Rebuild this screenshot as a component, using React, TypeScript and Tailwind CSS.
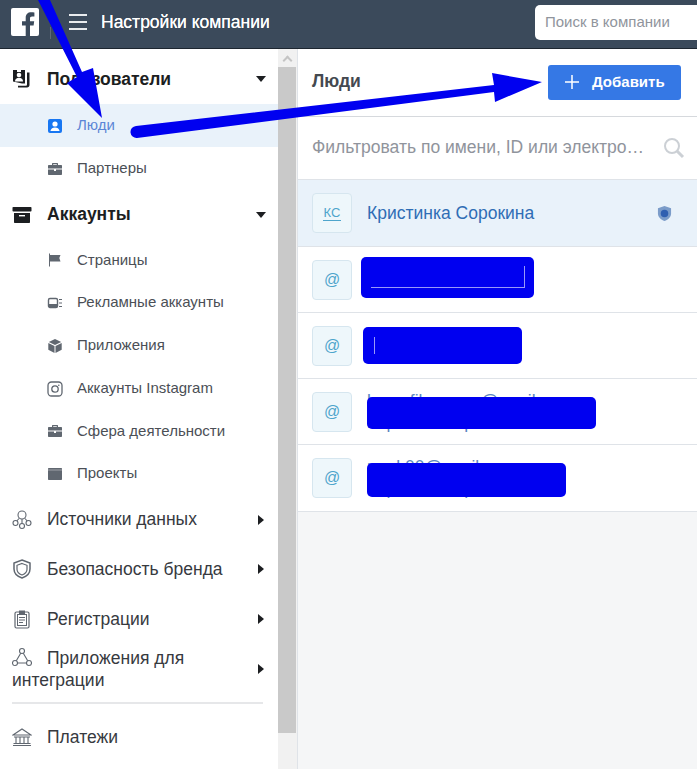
import React from "react";

const G = "#606770";

function Svg({ className, children, vb = "0 0 16 16" }: { className?: string; children: React.ReactNode; vb?: string }) {
  return <svg viewBox={vb} className={className} aria-hidden="true">{children}</svg>;
}

const PersonBox = ({ c = "#1877f2" }: { c?: string }) => (
  <Svg className="w-4 h-4">
    <rect x="1" y="1" width="14" height="14" rx="2" fill={c} />
    <circle cx="8" cy="6" r="2.6" fill="#fff" />
    <path d="M3.4 13c.5-2.6 2.4-3.6 4.6-3.6s4.100 1 4.600 3.600z" fill="#fff" />
  </Svg>
);
const Briefcase = () => (
  <Svg className="w-4 h-4">
    <path d="M5 4V2.600C5 2.200 5.300 2 5.600 2h4.800c.3 0 .6.200.6.600V4h-1.200V3.200H6.200V4z" fill={G} />
    <path d="M1 5c0-.6.400-1 1-1h12c.6 0 1 .4 1 1v2.600H1z" fill={G} />
    <path d="M1 8.600h6V10h2V8.600h6V13c0 .6-.4 1-1 1H2c-.6 0-1-.4-1-1z" fill={G} />
  </Svg>
);
const Flag = () => (
  <Svg className="w-4 h-4">
    <rect x="2" y="1.500" width="1" height="13" fill={G} />
    <path d="M3 3h10.500l-1.200 3 1.200 3.500H3z" fill={G} />
  </Svg>
);
const AdAccount = () => (
  <Svg className="w-4 h-4">
    <rect x="1.500" y="3.500" width="9" height="9" rx="1.500" fill="none" stroke={G} strokeWidth="1.400" />
    <rect x="2" y="9" width="8" height="3" fill={G} />
    <path d="M12 4.500h3M12 8h3M12 11.500h3" stroke={G} strokeWidth="1" />
  </Svg>
);
const Cube = () => (
  <Svg className="w-4 h-4">
    <path d="M8 1l6.200 3L8 7 1.800 4z" fill={G} />
    <path d="M1.300 5l6.200 3v7l-6.200-3.200zM14.700 5L8.500 8v7l6.200-3.200z" fill={G} />
  </Svg>
);
const Insta = () => (
  <Svg className="w-4 h-4">
    <rect x="1" y="1" width="14" height="14" rx="3.500" fill="none" stroke={G} strokeWidth="1.300" />
    <circle cx="8" cy="8" r="3.200" fill="none" stroke={G} strokeWidth="1.300" />
    <circle cx="11.800" cy="4.200" r=".8" fill={G} />
  </Svg>
);
const Folder = () => (
  <Svg className="w-4 h-4">
    <path d="M1 3c0-.6.400-1 1-1h12c.6 0 1 .4 1 1v10c0 .6-.4 1-1 1H2c-.6 0-1-.4-1-1z" fill={G} />
    <path d="M1 4h14" stroke="#fff" strokeWidth=".4" />
  </Svg>
);
const Users = () => (
  <Svg className="w-5 h-5" vb="0 0 20 20">
    <path d="M1 1h12v13.500h-3L1 12.500z" fill="#1c1e21" />
    <path d="M5 1h4v2H5z" fill="#fff" />
    <circle cx="7" cy="6" r="2.300" fill="#fff" />
    <path d="M3 12.500c0-2.500 1.700-3.700 4-3.700s4 1.200 4 3.700z" fill="#fff" />
    <path d="M15 3.500h2.500v12.500c0 1.500-1 2.500-2.500 2.500H6v-1.800h7.500c1 0 1.500-.5 1.500-1.500z" fill="#1c1e21" />
  </Svg>
);
const Archive = () => (
  <Svg className="w-5 h-5" vb="0 0 20 20">
    <rect x="0.500" y="2" width="19" height="4.500" rx=".8" fill="#1c1e21" />
    <path d="M2 8h16v9c0 .6-.4 1-1 1H3c-.6 0-1-.4-1-1z" fill="#1c1e21" />
    <rect x="7" y="10" width="6" height="1.400" fill="#fff" />
  </Svg>
);
const DataSources = () => (
  <Svg className="w-5 h-5" vb="0 0 20 20">
    <g fill="none" stroke={G} strokeWidth="1.100">
      <circle cx="10" cy="5" r="4" />
      <circle cx="3.500" cy="13" r="2.500" />
      <circle cx="16.500" cy="13" r="2.500" />
      <circle cx="10" cy="16" r="2.500" />
      <path d="M7 8.500l-2.200 2.500M13 8.500l2.200 2.500M10 9v4.500" />
    </g>
  </Svg>
);
const Shield = () => (
  <Svg className="w-5 h-5" vb="0 0 20 20">
    <path d="M10 1l8 3v6c0 4.500-3.500 7.500-8 9-4.500-1.500-8-4.500-8-9V4z" fill="none" stroke={G} strokeWidth="1.500" />
    <path d="M10 4.500l5 1.800v3.900c0 2.800-2.200 4.800-5 5.800-2.800-1-5-3-5-5.800V6.300z" fill="none" stroke={G} strokeWidth="1.200" />
  </Svg>
);
const Clipboard = () => (
  <Svg className="w-5 h-5" vb="0 0 20 20">
    <rect x="3" y="3" width="14" height="16" rx="1.500" fill="none" stroke={G} strokeWidth="1.200" />
    <rect x="5.500" y="5.500" width="9" height="11" fill="none" stroke={G} strokeWidth="1" />
    <path d="M7 1.500h6V5H7z" fill={G} />
    <path d="M7 8.500h6M7 11h6M7 13.500h4" stroke={G} strokeWidth="1" />
  </Svg>
);
const Triangle = () => (
  <Svg className="w-5 h-5" vb="0 0 20 20">
    <g fill="none" stroke={G} strokeWidth="1.100">
      <circle cx="10" cy="4" r="2.500" />
      <circle cx="3" cy="16" r="2.500" />
      <circle cx="17" cy="16" r="2.500" />
      <path d="M8.700 6.200L4.300 13.800M11.300 6.200l4.400 7.600M5.500 16h9" />
    </g>
  </Svg>
);
const Bank = () => (
  <Svg className="w-5 h-5" vb="0 0 20 20">
    <g fill="none" stroke={G} strokeWidth="1.100">
      <path d="M1 8L10 2l9 6z" />
      <path d="M2 10h16M1 18.500h18M1.500 16.500h17M4 10v6.500M8 10v6.500M12 10v6.500M16 10v6.500" />
    </g>
  </Svg>
);

const Down = () => <span className="w-0 h-0 border-x-[5px] border-x-transparent border-t-[6px] border-t-[#1c1e21]" />;
const Right = () => <span className="w-0 h-0 border-y-[5px] border-y-transparent border-l-[6px] border-l-[#1c1e21]" />;

function Section({ icon, label, bold, caret, className }: { icon: React.ReactNode; label: string; bold?: boolean; caret: React.ReactNode; className: string }) {
  return (
    <div className={`flex items-center pl-3 pr-3 ${className}`}>
      <span className="w-5 mr-[15px] flex justify-center">{icon}</span>
      <span className={`flex-1 text-[17.5px] ${bold ? "font-bold text-[#1c1e21]" : "text-[#373a3f]"}`}>{label}</span>
      <span className="w-[10px] flex justify-center">{caret}</span>
    </div>
  );
}

function Item({ icon, label, active, className }: { icon: React.ReactNode; label: string; active?: boolean; className: string }) {
  return (
    <div className={`flex items-center pl-[47px] ${active ? "bg-[#e9f2fa]" : ""} ${className}`}>
      <span className="w-4 mr-[14px] flex justify-center">{icon}</span>
      <span className={`text-[15px] ${active ? "text-[#5b86d6]" : "text-[#4b4f56]"}`}>{label}</span>
    </div>
  );
}

function Person({ lines, h, block, mark }: { lines?: [string, string]; h: string; block: string; mark?: string }) {
  return (
    <div className={`relative flex items-center pl-[14px] border-b border-[#dfe3e8] bg-white ${h}`}>
      <span className="w-10 h-10 shrink-0 flex items-center justify-center rounded-[4px] border border-[#d6e6ef] bg-[#eef7fb] text-[#4ea5cc] text-[16px]">@</span>
      {lines && (
        <span className="ml-[15px] text-[17.5px] leading-[21px] text-[#5b86c0] whitespace-nowrap">
          {lines[0]}
          <br />
          {lines[1]}
        </span>
      )}
      <span className={`absolute rounded-[5px] bg-[#0000f0] ${block}`}>
        {mark && <span className={`absolute border-white/60 ${mark}`} />}
      </span>
    </div>
  );
}

export default function App() {
  return (
    <div className="relative w-[697px] h-[769px] overflow-hidden bg-white font-['Liberation_Sans',Arial,sans-serif]">
      <header className="h-[49px] bg-[#3b4a5b] border-b border-[#1d2630] flex items-center">
        <svg viewBox="0 0 28 28" className="ml-[11px] w-[28px] h-[28px] mb-[4px]" aria-hidden="true">
          <rect width="28" height="28" rx="2" fill="#fff" />
          <path d="M19 28V17.500h3.600l.6-4.300H19v-2.700c0-1.300.4-2.100 2.200-2.100h2.200V4.500c-.4 0-1.700-.2-3.200-.2-3.300 0-5.500 2-5.500 5.600v3.300h-3.700v4.300h3.700V28z" fill="#3b4a5b" />
        </svg>
        <span className="ml-[11px] w-px h-[12px] mt-[18px] bg-[#5d6a78]" />
        <span className="ml-[18px] w-[18px] flex flex-col gap-[5px] mb-[4px]">
          <span className="h-[2px] bg-[#e8ebee]" />
          <span className="h-[2px] bg-[#e8ebee]" />
          <span className="h-[2px] bg-[#e8ebee]" />
        </span>
        <span className="ml-[14px] text-[17.5px] font-normal text-white mb-[4px] [text-shadow:0_0_.4px_#fff]">Настройки компании</span>
        <div className="ml-auto w-[162px] h-[35px] mb-[4px] pt-px rounded-l-[5px] bg-white flex items-center pl-[10px] text-[15px] text-[#90949c]">Поиск в компании</div>
      </header>

      <div className="flex h-[720px]">
        <aside className="w-[278px] shrink-0 bg-white">
          <Section icon={<Users />} label="Пользователи" bold caret={<Down />} className="h-[55px] pt-[5px]" />
          <Item icon={<PersonBox />} label="Люди" active className="h-[43px]" />
          <Item icon={<Briefcase />} label="Партнеры" className="h-[43px]" />
          <Section icon={<Archive />} label="Аккаунты" bold caret={<Down />} className="h-[49px]" />
          <Item icon={<Flag />} label="Страницы" className="h-[42px]" />
          <Item icon={<AdAccount />} label="Рекламные аккаунты" className="h-[43px]" />
          <Item icon={<Cube />} label="Приложения" className="h-[43px]" />
          <Item icon={<Insta />} label="Аккаунты Instagram" className="h-[43px]" />
          <Item icon={<Briefcase />} label="Сфера деятельности" className="h-[42px]" />
          <Item icon={<Folder />} label="Проекты" className="h-[43px]" />
          <Section icon={<DataSources />} label="Источники данных" caret={<Right />} className="h-[49px]" />
          <Section icon={<Shield />} label="Безопасность бренда" caret={<Right />} className="h-[50px]" />
          <Section icon={<Clipboard />} label="Регистрации" caret={<Right />} className="h-[50px]" />
          <div className="flex items-center pl-3 pr-3 h-[50px]">
            <div className="flex-1 text-[17.5px] leading-[22px] text-[#373a3f]">
              <span className="inline-block w-5 mr-[15px] align-[-3px]"><Triangle /></span>Приложения для
              <br />интеграции
            </div>
            <span className="w-[10px] flex justify-center"><Right /></span>
          </div>
          <div className="ml-3 mr-[15px] mt-2 h-[2px] bg-[#e6e7e9]" />
          <Section icon={<Bank />} label="Платежи" caret={null} className="h-[66px]" />
        </aside>

        <div className="w-[19px] shrink-0 bg-[#f1f1f1] flex flex-col">
          <div className="h-[18px] flex items-center justify-center">
            <span className="w-[7px] h-[7px] border-l-2 border-t-2 border-[#c4c4c4] rotate-45 mt-1" />
          </div>
          <div className="h-[666px] w-[18px] bg-[#c9c9c9]" />
        </div>

        <main className="flex-1 bg-[#f5f6f7] border-l border-[#dfe3e8]">
          <div className="h-[68px] bg-white border-b border-[#d6d9dd] flex items-center justify-between pl-[14px] pr-[16px]">
            <span className="text-[17.5px] font-bold text-[#444950] -mt-[2px]">Люди</span>
            <button className="w-[133px] h-[35px] mb-[1px] rounded-[3px] bg-[#3578e5] text-white text-[15px] font-bold flex items-center pl-[17px]">
              <svg viewBox="0 0 14 14" className="w-[14px] h-[14px] mr-[13px]" aria-hidden="true">
                <path d="M7 0v14M0 7h14" stroke="#fff" strokeWidth="1.500" />
              </svg>
              Добавить
            </button>
          </div>
          <div className="h-[63px] bg-white border-b border-[#dfe3e8] flex items-center pl-[14px] pr-[12px] justify-between">
            <span className="text-[17.5px] text-[#90949c] whitespace-nowrap -mt-[2px]">Фильтровать по имени, ID или электро…</span>
            <svg viewBox="0 0 22 22" className="w-[22px] h-[22px]" aria-hidden="true">
              <circle cx="9" cy="9" r="7" fill="none" stroke="#ccd0d5" strokeWidth="2" />
              <path d="M14 14l6 6" stroke="#ccd0d5" strokeWidth="3" />
            </svg>
          </div>
          <div className="h-[67px] bg-[#e9f2fa] border-b border-[#dfe3e8] flex items-center pl-[14px] pr-[25px]">
            <span className="w-10 h-10 rounded-[4px] border border-[#d6e6ef] bg-[#eef7fb] flex items-center justify-center">
              <span className="text-[#4ea5cc] text-[13px] leading-[15px] border-b border-[#4ea5cc] px-px">КС</span>
            </span>
            <span className="ml-[15px] text-[17.5px] text-[#2f6db5] flex-1">Кристинка Сорокина</span>
            <svg viewBox="0 0 16 16" className="w-[15px] h-[15px]" aria-hidden="true">
              <path d="M8 0l7 2.500v5.500c0 3.800-3 6.500-7 8-4-1.500-7-4.200-7-8V2.500z" fill="#7b9cc9" />
              <circle cx="8" cy="8" r="4" fill="#2f5fb0" />
            </svg>
          </div>
          <Person h="h-[66px]" block="left-[63px] top-[10px] w-[173px] h-[41px]" mark="left-[10px] top-[9px] w-[154px] h-[22px] border-b border-r" />
          <Person h="h-[66px]" block="left-[65px] top-[14px] w-[159px] h-[37px]" mark="left-[11px] top-[10px] w-[4px] h-[17px] border-l" />
          <Person lines={["lnnnnfilnnnnnn@nnail", "nnpnnnnnnnpnnnn"]} h="h-[66px]" block="left-[69px] top-[18px] w-[229px] h-[32px]" />
          <Person lines={["nnnk00@nnail", "nnpnnnnnnnpnnnn"]} h="h-[67px]" block="left-[69px] top-[18px] w-[199px] h-[34px]" />
        </main>
      </div>

      <svg viewBox="0 0 697 769" className="absolute inset-0 w-[697px] h-[769px] pointer-events-none" aria-hidden="true">
        <path d="M38 0H50L82 72 93 68 102 118 67 83 77 77Z" fill="#0000f0" />
        <path d="M136 126L494 85 492 73 542 82 495 102 494 92 137 138A6 6 0 0 1 136 126Z" fill="#0000f0" />
      </svg>
    </div>
  );
}
